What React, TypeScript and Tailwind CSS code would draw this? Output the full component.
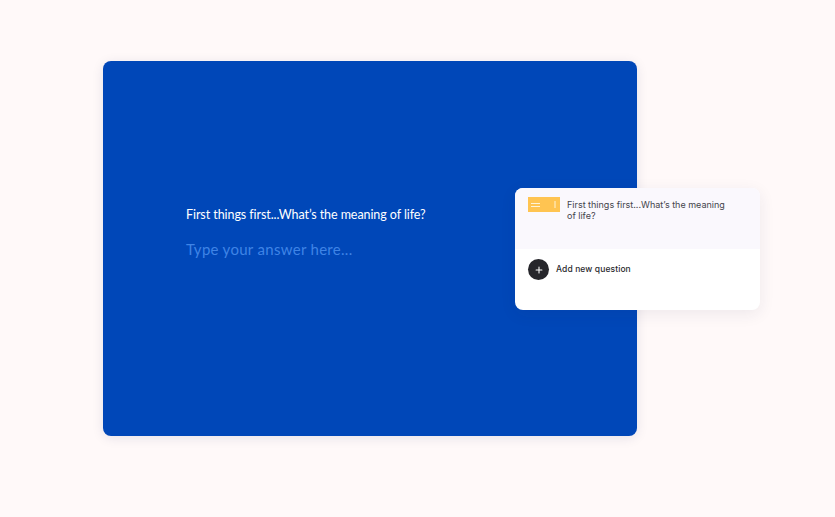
import { Plus } from 'lucide-react'

export default function App() {
  return (
    <div className="h-[517px] w-[835px] overflow-hidden bg-[#fff9f9] pl-[103px] pt-[61px]">
      <div className="relative h-[375px] w-[534px] rounded-lg bg-[#0047b8] shadow-[0_2px_12px_rgba(0,30,90,0.1)]">
        <div className="flex h-full flex-col pl-[83px] pt-[146px] font-['Lato',sans-serif]">
          <p className="text-[12.5px] leading-[16px] tracking-[-0.07px] text-white">First things first...What’s the meaning of life?</p>
          <p className="mt-[16px] text-[15px] leading-[20px] tracking-[0.3px] text-[#3f84e6]">Type your answer here...</p>
        </div>

        <div className="absolute left-[412px] top-[127px] h-[122px] w-[245px] overflow-hidden rounded-lg bg-white font-['Inter',sans-serif] shadow-[0_4px_16px_rgba(40,40,80,0.08)]">
          <div className="flex h-[61px] items-start bg-[#faf8fd] pl-[13px] pt-[9px]">
            <div className="flex h-[15px] w-[32px] shrink-0 items-center justify-between bg-[#ffc451] pl-[3px] pr-[4px]">
              <svg width="10" height="6" viewBox="0 0 10 6" fill="none" stroke="#fff3d6" strokeWidth="1">
                <path d="M0 1.5h9M0 4.5h9" />
              </svg>
              <svg width="2" height="7" viewBox="0 0 2 7" fill="none" stroke="#fff3d6" strokeWidth="1">
                <path d="M1 0v7" />
              </svg>
            </div>
            <p className="ml-[7px] mt-[2px] w-[162px] text-[9px] leading-[11px] text-[#44444c]">First things first...What’s the meaning of life?</p>
          </div>
          <div className="flex items-center pl-[13px] pt-[10px]">
            <div className="flex h-[21px] w-[21px] items-center justify-center rounded-full bg-[#26262b]">
              <Plus size={10} strokeWidth={2.5} className="text-white" />
            </div>
            <span className="ml-[7px] text-[8.5px] font-medium tracking-[0.1px] text-[#2a2a2e]">Add new question</span>
          </div>
        </div>
      </div>
    </div>
  )
}
